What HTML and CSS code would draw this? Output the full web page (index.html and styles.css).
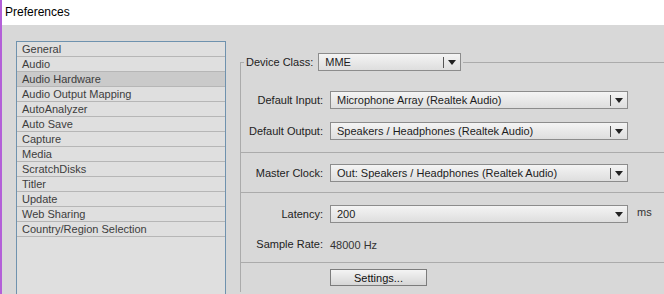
FILE: index.html
```html
<!DOCTYPE html>
<html lang="en">
<head>
    <meta charset="UTF-8">
    <meta name="viewport" content="width=device-width, initial-scale=1.0">
    <title>Preferences</title>
    <link rel="stylesheet" href="styles.css">
</head>
<body>
    <div class="titlebar">Preferences</div>

    <div class="content">
        <ul class="pref-list">
            <li>General</li>
            <li>Audio</li>
            <li class="selected">Audio Hardware</li>
            <li>Audio Output Mapping</li>
            <li>AutoAnalyzer</li>
            <li>Auto Save</li>
            <li>Capture</li>
            <li>Media</li>
            <li>ScratchDisks</li>
            <li>Titler</li>
            <li>Update</li>
            <li>Web Sharing</li>
            <li>Country/Region Selection</li>
        </ul>

        <div class="panel">
            <fieldset class="group">
                <legend class="group-head">
                    <span class="head-label">Device Class:</span>
                    <div class="select device">
                        <span class="value">MME</span>
                        <span class="arrow"></span>
                    </div>
                </legend>

                <div class="section first">
                    <div class="row">
                        <span class="label">Default Input:</span>
                        <div class="select">
                            <span class="value">Microphone Array (Realtek Audio)</span>
                            <span class="arrow"></span>
                        </div>
                    </div>
                    <div class="row">
                        <span class="label">Default Output:</span>
                        <div class="select">
                            <span class="value">Speakers / Headphones (Realtek Audio)</span>
                            <span class="arrow"></span>
                        </div>
                    </div>
                </div>

                <div class="section clock">
                    <div class="row">
                        <span class="label">Master Clock:</span>
                        <div class="select">
                            <span class="value">Out: Speakers / Headphones (Realtek Audio)</span>
                            <span class="arrow"></span>
                        </div>
                    </div>
                </div>

                <div class="section latency">
                    <div class="row">
                        <span class="label">Latency:</span>
                        <div class="select no-sep">
                            <span class="value">200</span>
                            <span class="arrow"></span>
                        </div>
                        <span class="unit">ms</span>
                    </div>
                    <div class="row rate">
                        <span class="label">Sample Rate:</span>
                        <span class="rate-value">48000 Hz</span>
                    </div>
                </div>

                <div class="section buttons">
                    <div class="row">
                        <span class="label"></span>
                        <button type="button" class="btn">Settings...</button>
                    </div>
                </div>
            </fieldset>
        </div>
    </div>
</body>
</html>
```

FILE: styles.css
```css
html, body {
    margin: 0;
    height: 100%;
}
body {
    font-family: 'Liberation Sans', Arial, sans-serif;
    font-size: 11px;
    color: #222;
    background-color: #d8d8d8;
    border-left: 2px solid #b35fd8;
    overflow: hidden;
}
.titlebar {
    height: 25px;
    line-height: 24px;
    padding-left: 3px;
    background: #fff;
    color: #000;
    font-size: 12px;
}
.content {
    display: flex;
    align-items: flex-start;
}

/* category list */
.pref-list {
    list-style: none;
    margin: 16px 0 0 14px;
    padding: 0;
    width: 208px;
    height: 252px;
    border: 1px solid #6f92ae;
    border-bottom: none;
    background: #dfdfdf;
}
.pref-list li {
    height: 14px;
    line-height: 14px;
    padding-left: 5px;
    border-bottom: 1px solid #b6b6b6;
    color: #3d3d3d;
}
.pref-list li.selected {
    background: #cacaca;
}

/* right panel */
.panel {
    flex: 1;
    margin: 28px 0 0 14px;
}
.group {
    margin: 0;
    padding: 0;
    border: none;
    border-top: 1px solid #ababab;
    border-left: 1px solid #ababab;
}
.group-head {
    display: flex;
    align-items: center;
    gap: 5px;
    margin-left: 3px;
    padding: 0 2px;
}
.head-label {
    color: #222;
}
.section + .section {
    border-top: 1px solid #ababab;
}
.section.first {
    padding: 20px 0 12px;
}
.section.clock {
    padding: 11px 0 10px;
}
.section.latency {
    padding: 12px 0 10px;
}
.section.buttons {
    padding: 6px 0 6px;
}
.row {
    display: grid;
    grid-template-columns: 82px 298px auto;
    column-gap: 7px;
    align-items: center;
}
.row + .row {
    margin-top: 13px;
}
.row.rate {
    margin-top: 12px;
    height: 17px;
}
.label {
    text-align: right;
    white-space: nowrap;
}
.unit {
    align-self: start;
    line-height: 14px;
    padding-left: 2px;
    color: #333;
}
.rate-value {
    padding-top: 3px;
    color: #333;
}

/* dropdowns */
.select {
    display: flex;
    align-items: center;
    height: 18px;
    box-sizing: border-box;
    border: 1px solid #8c8c8c;
    background: linear-gradient(#f4f4f4, #dedede);
}
.select.device {
    width: 143px;
}
.select .value {
    flex: 1;
    padding-left: 6px;
    color: #1c1c1c;
    white-space: nowrap;
    overflow: hidden;
}
.select .arrow {
    display: flex;
    align-items: center;
    justify-content: center;
    width: 16px;
    height: 11px;
    border-left: 1px solid #555;
}
.select.no-sep .arrow {
    border-left-color: transparent;
}
.select .arrow::after {
    content: '';
    border-left: 4px solid transparent;
    border-right: 4px solid transparent;
    border-top: 5px solid #222;
}

/* buttons */
.btn {
    width: 97px;
    height: 17px;
    padding: 0;
    font-family: inherit;
    font-size: 11px;
    color: #111;
    border: 1px solid #7c7c7c;
    border-radius: 0;
    background: linear-gradient(#f4f4f4, #d6d6d6);
}
```
